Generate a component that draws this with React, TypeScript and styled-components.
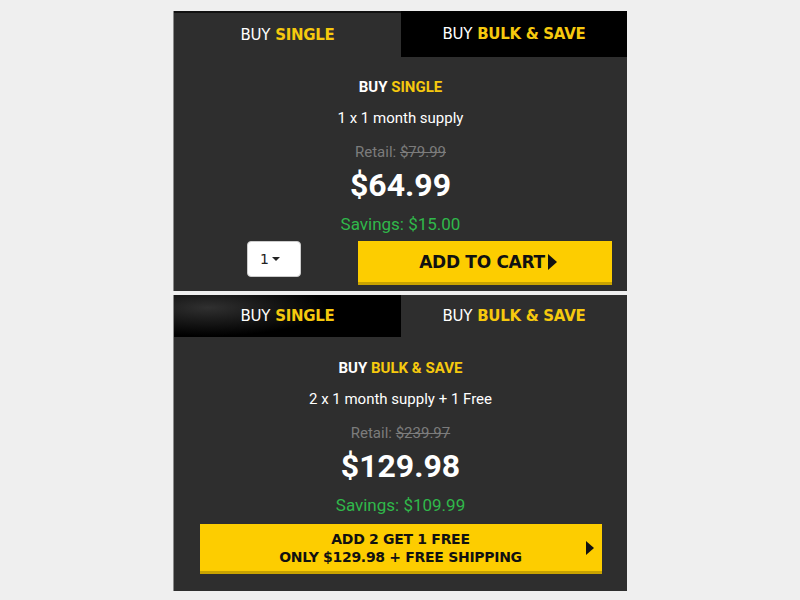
import { createGlobalStyle } from 'styled-components';
import styled from 'styled-components';

const GlobalStyle = createGlobalStyle`
    body {
        margin: 0;
        background: #efefef;
        font-family: Roboto, "Liberation Sans", sans-serif;
    }
`;

const Page = styled.div`
    width: 454px;
    margin: 0 auto;
    padding-top: 11px;
    display: flex;
    flex-direction: column;
    gap: 4px;
`;

const Panel = styled.div`
    background: #2e2e2e;
    border-left: 1px solid #8a8a8a;
    display: flex;
    flex-direction: column;
`;

const Tabs = styled.div<{ $h: number }>`
    display: grid;
    grid-template-columns: 227px 1fr;
    height: ${p => p.$h}px;
`;

const Tab = styled.div<{ $active?: boolean }>`
    display: flex;
    align-items: center;
    justify-content: center;
    background: ${p => (p.$active ? '#2e2e2e' : 'radial-gradient(ellipse 70% 90% at 15% 30%, #303030 0%, #000 75%)')};
    font-family: "DejaVu Sans", sans-serif;
    font-size: 15px;
    color: #fff;
    letter-spacing: -0.3px;
    b {
        color: #f6c90e;
        margin-left: 5px;
    }
`;

const TopTab = styled(Tab)`
    background: ${p => (p.$active ? '#2e2e2e' : '#000')};
    border-top: ${p => (p.$active ? '2px solid #111' : 'none')};
`;

const Body = styled.div<{ $top: number; $bottom: number }>`
    display: flex;
    flex-direction: column;
    align-items: center;
    padding: ${p => p.$top}px 15px ${p => p.$bottom}px;
    color: #fff;
    text-align: center;
`;

const Heading = styled.div`
    font-size: 15px;
    font-weight: 700;
    line-height: 20px;
    span {
        color: #f6c90e;
    }
`;

const Supply = styled.div`
    font-size: 15px;
    line-height: 20px;
    margin-top: 11px;
`;

const Retail = styled.div`
    font-size: 15px;
    line-height: 20px;
    color: #7c7c7c;
    margin-top: 14px;
    s {
        text-decoration-thickness: 1px;
    }
`;

const Price = styled.div`
    font-size: 32px;
    font-weight: 700;
    line-height: 36px;
    margin-top: 5px;
`;

const Savings = styled.div`
    font-size: 17px;
    line-height: 22px;
    color: #30b84a;
    margin-top: 10px;
`;

const CartRow = styled.div`
    align-self: stretch;
    display: flex;
    justify-content: flex-end;
    align-items: flex-start;
    gap: 57px;
    margin-top: 6px;
`;

const QtySelect = styled.div`
    width: 54px;
    height: 36px;
    box-sizing: border-box;
    background: #fff;
    border: 1px solid #ccc;
    border-radius: 4px;
    display: flex;
    align-items: center;
    padding-left: 12px;
    gap: 3px;
    font-family: "DejaVu Sans", sans-serif;
    font-size: 14px;
    color: #222;
`;

const Caret = styled.span`
    width: 0;
    height: 0;
    border-left: 4px solid transparent;
    border-right: 4px solid transparent;
    border-top: 4px solid #222;
`;

const YellowButton = styled.div<{ $w: number; $h: number }>`
    width: ${p => p.$w}px;
    height: ${p => p.$h}px;
    box-sizing: border-box;
    background: #fdcd00;
    border-bottom: 3px solid #c9a300;
    color: #111;
    font-family: "DejaVu Sans", sans-serif;
    font-weight: 700;
    position: relative;
    display: flex;
    align-items: center;
    justify-content: center;
`;

const CartLabel = styled.span`
    font-size: 17px;
    letter-spacing: -0.3px;
    display: flex;
    align-items: center;
    gap: 3px;
    margin-left: 6px;
`;

const Arrow = styled.span`
    width: 0;
    height: 0;
    border-top: 8px solid transparent;
    border-bottom: 8px solid transparent;
    border-left: 9px solid #111;
`;

const BulkLabel = styled.span`
    font-size: 14px;
    font-weight: 600;
    line-height: 18px;
    letter-spacing: -0.3px;
`;

const SideArrow = styled(Arrow)`
    position: absolute;
    right: 8px;
    top: 17px;
    border-top-width: 7px;
    border-bottom-width: 7px;
    border-left-width: 8px;
`;

const BulkRow = styled.div`
    margin-top: 8px;
`;

export default function App() {
    return (
        <>
            <GlobalStyle />
            <Page>
                <Panel>
                    <Tabs $h={46}>
                        <TopTab $active>BUY<b>SINGLE</b></TopTab>
                        <TopTab>BUY<b>BULK &amp; SAVE</b></TopTab>
                    </Tabs>
                    <Body $top={20} $bottom={6}>
                        <Heading>BUY <span>SINGLE</span></Heading>
                        <Supply>1 x 1 month supply</Supply>
                        <Retail>Retail: <s>$79.99</s></Retail>
                        <Price>$64.99</Price>
                        <Savings>Savings: $15.00</Savings>
                        <CartRow>
                            <QtySelect>1<Caret /></QtySelect>
                            <YellowButton $w={254} $h={44}>
                                <CartLabel>ADD TO CART<Arrow /></CartLabel>
                            </YellowButton>
                        </CartRow>
                    </Body>
                </Panel>
                <Panel>
                    <Tabs $h={42}>
                        <Tab>BUY<b>SINGLE</b></Tab>
                        <Tab $active>BUY<b>BULK &amp; SAVE</b></Tab>
                    </Tabs>
                    <Body $top={21} $bottom={17}>
                        <Heading>BUY <span>BULK &amp; SAVE</span></Heading>
                        <Supply>2 x 1 month supply + 1 Free</Supply>
                        <Retail>Retail: <s>$239.97</s></Retail>
                        <Price>$129.98</Price>
                        <Savings>Savings: $109.99</Savings>
                        <BulkRow>
                            <YellowButton $w={402} $h={50}>
                                <BulkLabel>ADD 2 GET 1 FREE<br />ONLY $129.98 + FREE SHIPPING</BulkLabel>
                                <SideArrow />
                            </YellowButton>
                        </BulkRow>
                    </Body>
                </Panel>
            </Page>
        </>
    );
}
